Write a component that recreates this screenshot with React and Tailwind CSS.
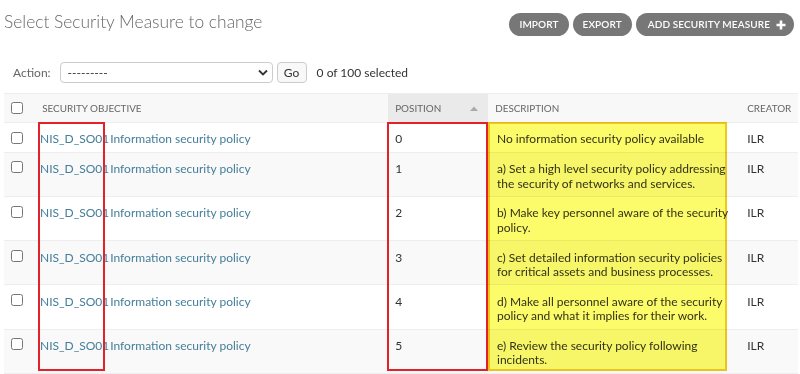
import React from "react";

const rows = [
  { pos: "0", desc: ["No information security policy available"] },
  { pos: "1", desc: ["a) Set a high level security policy addressing", "the security of networks and services."] },
  { pos: "2", desc: ["b) Make key personnel aware of the security", "policy."] },
  { pos: "3", desc: ["c) Set detailed information security policies", "for critical assets and business processes."] },
  { pos: "4", desc: ["d) Make all personnel aware of the security", "policy and what it implies for their work."] },
  { pos: "5", desc: ["e) Review the security policy following", "incidents."] },
];

function PlusIcon() {
  return (
    <svg width="10" height="10" viewBox="0 0 10 10" className="ml-[6px]">
      <path d="M5 0.5v9M0.5 5h9" stroke="#fff" strokeWidth="2.6" />
    </svg>
  );
}

function Checkbox() {
  return (
    <input
      type="checkbox"
      className="m-0 block w-[12px] h-[12px] accent-[#447e9b]"
    />
  );
}

export default function App() {
  return (
    <div
      className="w-[800px] h-[374px] overflow-hidden bg-white text-[#333]"
      style={{ fontFamily: "Lato, 'Open Sans', sans-serif" }}
    >
      {/* header */}
      <div className="flex justify-between items-start pl-[4px] pr-[6px] pt-[9px]">
        <h1 className="text-[17.4px] leading-[26px] font-light text-[#666]">
          Select Security Measure to change
        </h1>
        <div className="flex gap-[4px] mt-[4px]">
          <a className="h-[23px] flex items-center px-[10px] rounded-full bg-[#777] text-white text-[10px] tracking-[0.1px] font-semibold">
            IMPORT
          </a>
          <a className="h-[23px] flex items-center px-[10px] rounded-full bg-[#777] text-white text-[10px] tracking-[0.1px] font-semibold">
            EXPORT
          </a>
          <a className="h-[23px] flex items-center pl-[12px] pr-[8px] rounded-full bg-[#777] text-white text-[10px] tracking-[0.1px] font-semibold">
            ADD SECURITY MEASURE
            <PlusIcon />
          </a>
        </div>
      </div>

      {/* actions */}
      <div className="flex items-center mt-[26px] pl-[13px] h-[21px] text-[12px]">
        <span className="text-[#666]">Action:</span>
        <div className="ml-[9px] w-[213px] h-[21px] border border-[#ccc] rounded-[4px] flex items-center justify-between pl-[7px] pr-[4px]">
          <span className="text-[#333]">---------</span>
          <svg width="10" height="7" viewBox="0 0 10 7">
            <path d="M1 1.5l4 4 4-4" stroke="#333" strokeWidth="1.8" fill="none" />
          </svg>
        </div>
        <div className="ml-[4px] w-[30px] h-[21px] border border-[#ccc] rounded-[4px] bg-[#f8f8f8] flex items-center justify-center text-[#333]">
          Go
        </div>
        <span className="ml-[10px] text-[#333]">0 of 100 selected</span>
      </div>

      {/* table */}
      <div className="relative ml-[4px] mt-[10px] w-[794px]">
        <table className="table-fixed border-collapse w-[794px] text-[12px] leading-[14.4px]">
          <colgroup>
            <col className="w-[31px]" />
            <col className="w-[353px]" />
            <col className="w-[100px]" />
            <col className="w-[252px]" />
            <col className="w-[58px]" />
          </colgroup>
          <thead>
            <tr className="h-[29px] bg-[#f8f8f8] border-t border-b border-[#eee] text-[9.9px] text-[#666] uppercase text-left">
              <th className="font-normal px-[7.2px]">
                <Checkbox />
              </th>
              <th className="font-normal px-[7.2px]">Security objective</th>
              <th className="font-normal px-[7.2px] bg-[#eaeaea]">
                <div className="flex items-center justify-between">
                  <span>Position</span>
                  <svg width="8" height="5" viewBox="0 0 8 5" className="mr-[3px]">
                    <path d="M0 5L4 0.5L8 5z" fill="#aaa" />
                  </svg>
                </div>
              </th>
              <th className="font-normal px-[7.2px]">Description</th>
              <th className="font-normal px-[7.2px] text-right">Creator</th>
            </tr>
          </thead>
          <tbody>
            {rows.map((r, i) => (
              <tr
                key={i}
                className={`border-b border-[#eee] align-top ${i % 2 === 1 ? "bg-[#f9f9f9]" : "bg-white"}`}
              >
                <td className="p-[7.2px] pt-[8.6px] pb-[5.8px]">
                  <Checkbox />
                </td>
                <td className="px-[7.2px] pl-[5px] pt-[9.4px] pb-[5px] whitespace-nowrap text-[#447e9b]">
                  <span>NIS_D_SO01</span>
                  <span className="ml-[1px]">Information security policy</span>
                </td>
                <td className="px-[7.2px] pt-[9.4px] pb-[5px]">{r.pos}</td>
                <td className="px-[7.2px] pl-[9px] pt-[9.4px] pb-[5px]">
                  {r.desc.map((l, j) => (
                    <span key={j} className="block whitespace-nowrap">
                      {l}
                    </span>
                  ))}
                </td>
                <td className="px-[7.2px] pt-[9.4px] pb-[5px]">ILR</td>
              </tr>
            ))}
          </tbody>
        </table>

        {/* annotation overlays */}
        <div className="absolute pointer-events-none left-[34px] top-[29px] w-[67px] h-[249px] border-2 border-[#e3212b]" />
        <div className="absolute pointer-events-none left-[383px] top-[29px] w-[101px] h-[249px] border-2 border-[#e3212b]" />
        <div className="absolute pointer-events-none left-[484px] top-[29px] w-[239px] h-[249px] border-2 border-[#f2c81a] bg-[#fcfc6a] mix-blend-multiply" />
      </div>
    </div>
  );
}
